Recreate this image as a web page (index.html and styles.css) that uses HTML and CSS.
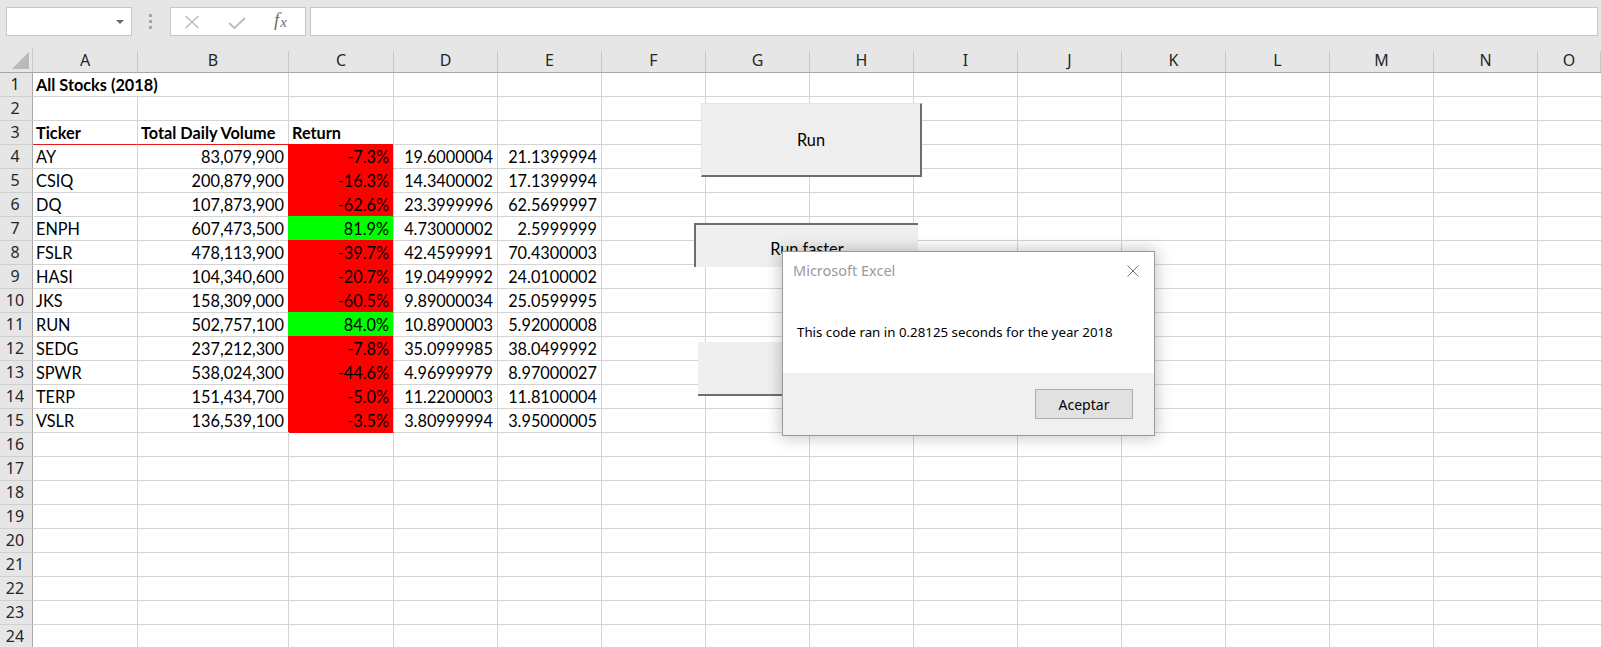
FILE: index.html
```html
<!DOCTYPE html>
<html>
<head>
<meta charset="utf-8">
<link rel="stylesheet" href="styles.css">
</head>
<body>
<div class="app">
  <div class="toolbar">
    <div class="namebox"><span class="caret"></span></div>
    <div class="grip"><i></i><i></i><i></i></div>
    <div class="fxbox">
      <svg class="ico-x" width="16" height="14" viewBox="0 0 16 14"><path d="M1.5 1 L14.5 13 M14.5 1 L1.5 13" stroke="#bdbdbd" stroke-width="1.6" fill="none"/></svg>
      <svg class="ico-ok" width="18" height="12" viewBox="0 0 18 12"><path d="M1 6 L6.5 11 L17 1" stroke="#bdbdbd" stroke-width="2" fill="none"/></svg>
      <span class="fx"><span class="fx-f">f</span><span class="fx-x">x</span></span>
    </div>
    <div class="formula"></div>
  </div>

  <div class="sheet">
    <div class="colhead">
      <div class="corner"><span class="tri"></span></div>
      <div class="ch">A</div><div class="ch">B</div><div class="ch">C</div><div class="ch">D</div><div class="ch">E</div><div class="ch">F</div><div class="ch">G</div><div class="ch">H</div><div class="ch">I</div><div class="ch">J</div><div class="ch">K</div><div class="ch">L</div><div class="ch">M</div><div class="ch">N</div><div class="ch">O</div>
    </div>

    <div class="row"><div class="rh">1</div><div class="c bold span2">All Stocks (2018)</div><div class="c"></div><div class="c"></div><div class="c"></div><div class="rest"></div></div>
    <div class="row"><div class="rh">2</div><div class="c"></div><div class="c"></div><div class="c"></div><div class="c"></div><div class="c"></div><div class="rest"></div></div>
    <div class="row"><div class="rh">3</div><div class="c bold redline">Ticker</div><div class="c bold redline">Total Daily Volume</div><div class="c bold">Return</div><div class="c"></div><div class="c"></div><div class="rest"></div></div>

    <div class="row"><div class="rh">4</div><div class="c">AY</div><div class="c num">83,079,900</div><div class="c num neg">-7.3%</div><div class="c num">19.6000004</div><div class="c num">21.1399994</div><div class="rest"></div></div>
    <div class="row"><div class="rh">5</div><div class="c">CSIQ</div><div class="c num">200,879,900</div><div class="c num neg">-16.3%</div><div class="c num">14.3400002</div><div class="c num">17.1399994</div><div class="rest"></div></div>
    <div class="row"><div class="rh">6</div><div class="c">DQ</div><div class="c num">107,873,900</div><div class="c num neg">-62.6%</div><div class="c num">23.3999996</div><div class="c num">62.5699997</div><div class="rest"></div></div>
    <div class="row"><div class="rh">7</div><div class="c">ENPH</div><div class="c num">607,473,500</div><div class="c num pos">81.9%</div><div class="c num">4.73000002</div><div class="c num">2.5999999</div><div class="rest"></div></div>
    <div class="row"><div class="rh">8</div><div class="c">FSLR</div><div class="c num">478,113,900</div><div class="c num neg">-39.7%</div><div class="c num">42.4599991</div><div class="c num">70.4300003</div><div class="rest"></div></div>
    <div class="row"><div class="rh">9</div><div class="c">HASI</div><div class="c num">104,340,600</div><div class="c num neg">-20.7%</div><div class="c num">19.0499992</div><div class="c num">24.0100002</div><div class="rest"></div></div>
    <div class="row"><div class="rh">10</div><div class="c">JKS</div><div class="c num">158,309,000</div><div class="c num neg">-60.5%</div><div class="c num">9.89000034</div><div class="c num">25.0599995</div><div class="rest"></div></div>
    <div class="row"><div class="rh">11</div><div class="c">RUN</div><div class="c num">502,757,100</div><div class="c num pos">84.0%</div><div class="c num">10.8900003</div><div class="c num">5.92000008</div><div class="rest"></div></div>
    <div class="row"><div class="rh">12</div><div class="c">SEDG</div><div class="c num">237,212,300</div><div class="c num neg">-7.8%</div><div class="c num">35.0999985</div><div class="c num">38.0499992</div><div class="rest"></div></div>
    <div class="row"><div class="rh">13</div><div class="c">SPWR</div><div class="c num">538,024,300</div><div class="c num neg">-44.6%</div><div class="c num">4.96999979</div><div class="c num">8.97000027</div><div class="rest"></div></div>
    <div class="row"><div class="rh">14</div><div class="c">TERP</div><div class="c num">151,434,700</div><div class="c num neg">-5.0%</div><div class="c num">11.2200003</div><div class="c num">11.8100004</div><div class="rest"></div></div>
    <div class="row"><div class="rh">15</div><div class="c">VSLR</div><div class="c num">136,539,100</div><div class="c num neg">-3.5%</div><div class="c num">3.80999994</div><div class="c num">3.95000005</div><div class="rest"></div></div>

    <div class="row"><div class="rh">16</div><div class="c"></div><div class="c"></div><div class="c"></div><div class="c"></div><div class="c"></div><div class="rest"></div></div>
    <div class="row"><div class="rh">17</div><div class="c"></div><div class="c"></div><div class="c"></div><div class="c"></div><div class="c"></div><div class="rest"></div></div>
    <div class="row"><div class="rh">18</div><div class="c"></div><div class="c"></div><div class="c"></div><div class="c"></div><div class="c"></div><div class="rest"></div></div>
    <div class="row"><div class="rh">19</div><div class="c"></div><div class="c"></div><div class="c"></div><div class="c"></div><div class="c"></div><div class="rest"></div></div>
    <div class="row"><div class="rh">20</div><div class="c"></div><div class="c"></div><div class="c"></div><div class="c"></div><div class="c"></div><div class="rest"></div></div>
    <div class="row"><div class="rh">21</div><div class="c"></div><div class="c"></div><div class="c"></div><div class="c"></div><div class="c"></div><div class="rest"></div></div>
    <div class="row"><div class="rh">22</div><div class="c"></div><div class="c"></div><div class="c"></div><div class="c"></div><div class="c"></div><div class="rest"></div></div>
    <div class="row"><div class="rh">23</div><div class="c"></div><div class="c"></div><div class="c"></div><div class="c"></div><div class="c"></div><div class="rest"></div></div>
    <div class="row"><div class="rh">24</div><div class="c"></div><div class="c"></div><div class="c"></div><div class="c"></div><div class="c"></div><div class="rest"></div></div>
  </div>

  <div class="xbtn btn-run">Run</div>
  <div class="xbtn btn-faster">Run faster</div>
  <div class="xbtn btn-third"></div>

  <div class="dialog">
    <div class="dlg-body">
      <div class="dlg-title">
        <span>Microsoft Excel</span>
        <svg class="dlg-close" width="12" height="12" viewBox="0 0 12 12"><path d="M0.5 0.5 L11.5 11.5 M11.5 0.5 L0.5 11.5" stroke="#6f6f6f" stroke-width="1" fill="none"/></svg>
      </div>
      <p class="dlg-msg">This code ran in 0.28125 seconds for the year 2018</p>
    </div>
    <div class="dlg-foot">
      <div class="dlg-btn">Aceptar</div>
    </div>
  </div>
</div>
</body>
</html>
```
FILE: styles.css
```css
* { box-sizing: border-box; margin: 0; padding: 0; }
html, body { margin: 0; background: #fff; }
body { width: 1601px; height: 647px; overflow: hidden; }
.app { position: relative; width: 1601px; height: 647px; overflow: hidden; font-family: Lato, "Liberation Sans", sans-serif; }

/* toolbar */
.toolbar { height: 48px; background: #e6e6e6; display: flex; align-items: flex-start; padding: 7px 3px 0 6px; }
.namebox { width: 126px; height: 29px; background: #fff; border: 1px solid #c6c6c6; position: relative; }
.caret { position: absolute; right: 7px; top: 12px; width: 0; height: 0; border-left: 4px solid transparent; border-right: 4px solid transparent; border-top: 4px solid #6a6a6a; }
.grip { margin-left: 17px; width: 3px; display: flex; flex-direction: column; gap: 3px; padding-top: 7px; }
.grip i { display: block; width: 3px; height: 3px; background: #a6a6a6; }
.fxbox { margin-left: 18px; width: 136px; height: 29px; background: #fff; border: 1px solid #c6c6c6; display: flex; align-items: center; padding-left: 13px; }
.ico-x { margin-top: 1px; }
.ico-ok { margin-left: 28px; margin-top: 2px; }
.fx { margin-left: 28px; color: #707070; font-family: "Liberation Serif", serif; font-style: italic; font-size: 19px; line-height: 20px; display: flex; align-items: baseline; margin-top: -2px; }
.fx-x { font-size: 15px; margin-left: 1px; position: relative; top: 1px; }
.formula { flex: 1; margin-left: 4px; height: 29px; background: #fff; border: 1px solid #c6c6c6; }

/* sheet */
.sheet { display: flex; flex-direction: column; }
.colhead { display: grid; grid-template-columns: 33px 105px 151px 105px repeat(11, 104px) 63px; height: 25px; background: #e6e6e6; border-bottom: 1px solid #a8a8a8; }
.corner { position: relative; border-right: 1px solid #c8c8c8; }
.tri { position: absolute; right: 3px; bottom: 3px; width: 0; height: 0; border-left: 17px solid transparent; border-bottom: 17px solid #b9b9b9; }
.ch { border-right: 1px solid #c8c8c8; margin-top: 3px; text-align: center; font-family: "Noto Sans", "Open Sans", sans-serif; font-size: 16px; line-height: 19px; color: #262626; }

.row { display: grid; grid-template-columns: 33px 105px 151px 105px 104px 104px 1fr; height: 24px; }
.rh { background: #e6e6e6; border-right: 1px solid #ababab; border-bottom: 1px solid #cfcfcf; text-align: center; font-family: "Noto Sans", "Open Sans", sans-serif; font-size: 16px; line-height: 23px; color: #262626; padding-right: 2px; }
.c { border-right: 1px solid #d4d4d4; border-bottom: 1px solid #d4d4d4; font-size: 16.3px; line-height: 22px; padding: 1px 4px 0 3px; color: #000; white-space: nowrap; overflow: visible; }
.span2 { grid-column: span 2; }
.bold { font-weight: 700; }
.num { text-align: right; }
.redline { border-bottom-color: #e21b1b; }
.neg { background: #ff0000; border-bottom-color: #ff0000; box-shadow: -1px -1px 0 0 #ff0000; }
.pos { background: #00ff00; border-bottom-color: #00ff00; box-shadow: -1px -1px 0 0 #00ff00; }
.rest { border-bottom: 1px solid #d4d4d4; background: repeating-linear-gradient(90deg, transparent 0 103px, #d4d4d4 103px 104px); }

/* form buttons (floating shapes) */
.xbtn { position: absolute; background: #efefef; font-size: 16.3px; color: #000; display: flex; align-items: center; justify-content: center; }
.btn-run { left: 701px; top: 103px; width: 221px; height: 74px; border-right: 2px solid #6e6e6e; border-bottom: 2px solid #6e6e6e; border-top: 1px solid #e4e4e4; border-left: 1px solid #e4e4e4; }
.btn-faster { left: 694px; top: 223px; width: 224px; height: 44px; border-top: 2px solid #6e6e6e; border-left: 2px solid #6e6e6e; padding-top: 4px; }
.btn-third { left: 698px; top: 342px; width: 221px; height: 54px; border-bottom: 2px solid #6e6e6e; border-right: 2px solid #6e6e6e; }

/* message box */
.dialog { position: absolute; left: 782px; top: 251px; width: 373px; height: 185px; background: #f0f0f0; border: 1px solid #9a9a9a; box-shadow: 0 0 14px 2px rgba(0,0,0,0.22); display: flex; flex-direction: column; font-family: "Noto Sans", "Open Sans", sans-serif; }
.dlg-body { background: #fff; height: 121px; display: flex; flex-direction: column; }
.dlg-title { display: flex; align-items: center; justify-content: space-between; height: 36px; padding: 0 15px 0 10px; font-size: 14.5px; color: #9b9b9b; }
.dlg-close { margin-top: 1px; }
.dlg-msg { margin-top: 34px; padding-left: 14px; font-size: 13.3px; color: #000; line-height: 20px; }
.dlg-foot { flex: 1; display: flex; justify-content: flex-end; align-items: flex-start; padding: 16px 21px 0 0; }
.dlg-btn { width: 98px; height: 30px; background: #e1e1e1; border: 1px solid #adadad; display: flex; align-items: center; justify-content: center; font-size: 14px; color: #000; }
```
